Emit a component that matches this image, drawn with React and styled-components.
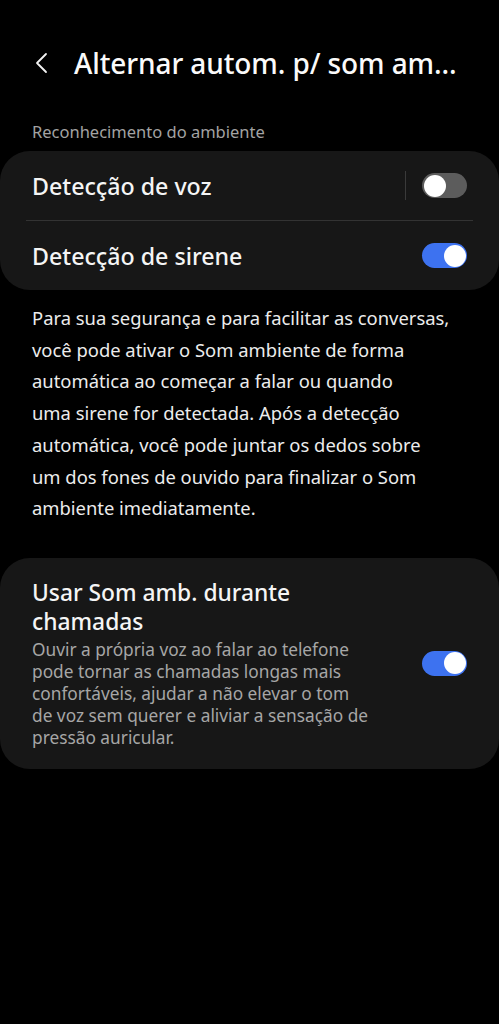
import styled, { createGlobalStyle } from "styled-components";

const Global = createGlobalStyle`
  html, body {
    margin: 0;
    padding: 0;
    background: #000;
  }
  body {
    font-family: "Noto Sans", "Open Sans", sans-serif;
    color: #f2f2f2;
    -webkit-font-smoothing: antialiased;
  }
`;

const Page = styled.div`
  width: 499px;
  min-height: 1024px;
  background: #000;
  display: flex;
  flex-direction: column;
`;

const Header = styled.div`
  height: 64px;
  margin-top: 31px;
  display: flex;
  align-items: center;
  padding-left: 30px;
  gap: 22px;
`;

const Back = styled.div`
  width: 22px;
  height: 30px;
  display: flex;
  align-items: center;
  justify-content: center;
`;

const Title = styled.h1`
  margin: 0;
  font-size: 28px;
  font-weight: 500;
  color: #fafafa;
  white-space: nowrap;
  letter-spacing: -0.1px;
`;

const SectionLabel = styled.div`
  padding: 25px 32px 7px;
  font-size: 16.5px;
  color: #a3a3a3;
  line-height: 24px;
`;

const Card = styled.div`
  background: #171717;
  border-radius: 30px;
  display: flex;
  flex-direction: column;
  margin-top: ${p => p.$top || 0}px;
`;

const Row = styled.div`
  height: 69px;
  display: flex;
  align-items: center;
  padding: 0 32px;
  gap: 16px;
`;

const RowLabel = styled.div`
  flex: 1;
  font-size: 23.2px;
  font-weight: 500;
  color: #f5f5f5;
`;

const Divider = styled.div`
  height: 1px;
  margin: 0 26px;
  background: #333;
`;

const VBar = styled.div`
  width: 1px;
  height: 29px;
  background: #3a3a3a;
`;

const Track = styled.div`
  width: 45px;
  height: 25px;
  border-radius: 13px;
  background: ${p => (p.$on ? "#3d72f0" : "#5c5c5c")};
  display: flex;
  align-items: center;
  justify-content: ${p => (p.$on ? "flex-end" : "flex-start")};
  padding: 0 1.5px;
  box-sizing: border-box;
  flex-shrink: 0;
`;

const Knob = styled.div`
  width: 22px;
  height: 22px;
  border-radius: 50%;
  background: #fff;
`;

const Paragraph = styled.p`
  margin: 12px 0 0;
  padding: 0 32px;
  font-size: 18.4px;
  line-height: 31.7px;
  color: #ececec;
  white-space: nowrap;
`;

const BigRow = styled.div`
  display: flex;
  align-items: center;
  padding: 20px 32px 20px;
  gap: 20px;
`;

const TextCol = styled.div`
  flex: 1;
  display: flex;
  flex-direction: column;
`;

const BigTitle = styled.div`
  font-size: 22.8px;
  font-weight: 500;
  line-height: 29px;
  color: #f5f5f5;
`;

const Sub = styled.div`
  margin-top: 3px;
  font-size: 17.3px;
  line-height: 22px;
  color: #a6a6a6;
  white-space: nowrap;
`;

const Toggle = ({ on }) => (
  <Track $on={on}>
    <Knob />
  </Track>
);

export default function App() {
  return (
    <Page>
      <Global />
      <Header>
        <Back>
          <svg width="14" height="22" viewBox="0 0 14 22">
            <path d="M12 2 L3 11 L12 20" fill="none" stroke="#f2f2f2" strokeWidth="1.8" strokeLinecap="round" strokeLinejoin="round" />
          </svg>
        </Back>
        <Title>Alternar autom. p/ som am...</Title>
      </Header>
      <SectionLabel>Reconhecimento do ambiente</SectionLabel>
      <Card>
        <Row>
          <RowLabel>Detecção de voz</RowLabel>
          <VBar />
          <Toggle on={false} />
        </Row>
        <Divider />
        <Row>
          <RowLabel>Detecção de sirene</RowLabel>
          <Toggle on />
        </Row>
      </Card>
      <Paragraph>
        Para sua segurança e para facilitar as conversas,<br />
        você pode ativar o Som ambiente de forma<br />
        automática ao começar a falar ou quando<br />
        uma sirene for detectada. Após a detecção<br />
        automática, você pode juntar os dedos sobre<br />
        um dos fones de ouvido para finalizar o Som<br />
        ambiente imediatamente.
      </Paragraph>
      <Card $top={34}>
        <BigRow>
          <TextCol>
            <BigTitle>
              Usar Som amb. durante<br />
              chamadas
            </BigTitle>
            <Sub>
              Ouvir a própria voz ao falar ao telefone<br />
              pode tornar as chamadas longas mais<br />
              confortáveis, ajudar a não elevar o tom<br />
              de voz sem querer e aliviar a sensação de<br />
              pressão auricular.
            </Sub>
          </TextCol>
          <Toggle on />
        </BigRow>
      </Card>
    </Page>
  );
}
